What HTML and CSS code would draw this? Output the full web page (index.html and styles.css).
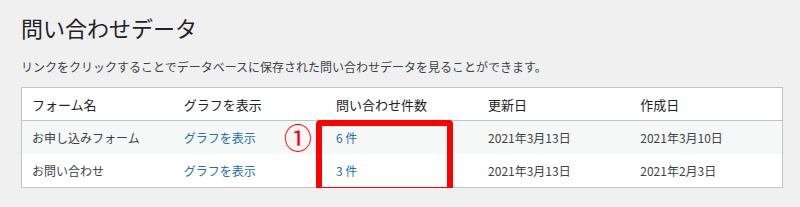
FILE: index.html
```html
<!DOCTYPE html>
<html lang="ja">
<head>
<meta charset="utf-8">
<link rel="stylesheet" href="styles.css">
</head>
<body>
<div class="wrap">
  <h1 class="title">問い合わせデータ</h1>
  <p class="desc">リンクをクリックすることでデータベースに保存された問い合わせデータを見ることができます。</p>
  <div class="table-box">
    <table class="data">
      <thead>
        <tr><th>フォーム名</th><th>グラフを表示</th><th>問い合わせ件数</th><th>更新日</th><th>作成日</th></tr>
      </thead>
      <tbody>
        <tr class="alt"><td>お申し込みフォーム</td><td><a href="#">グラフを表示</a></td><td><a href="#">6 件</a></td><td>2021年3月13日</td><td>2021年3月10日</td></tr>
        <tr><td>お問い合わせ</td><td><a href="#">グラフを表示</a></td><td><a href="#">3 件</a></td><td>2021年3月13日</td><td>2021年2月3日</td></tr>
      </tbody>
    </table>
    <span class="mark">①</span>
    <div class="highlight"></div>
  </div>
</div>
</body>
</html>
```
FILE: styles.css
```css
html, body {
  margin: 0;
  padding: 0;
  background: #f0f0f1;
}
body {
  font-family: "Noto Sans CJK JP", "Noto Sans", sans-serif;
  color: #3c434a;
}
.wrap {
  padding: 10px 17px 0 21px;
}
.title {
  margin: 0;
  font-size: 22px;
  font-weight: 400;
  line-height: 34px;
  color: #1d2327;
}
.desc {
  margin: 15px 0 0;
  font-size: 12px;
  line-height: 16px;
  color: #3c434a;
}
.table-box {
  position: relative;
  margin-top: 12px;
  width: 762px;
}
.data {
  width: 100%;
  border-collapse: collapse;
  table-layout: fixed;
  background: #fff;
  border: 1px solid #c3c4c7;
  box-shadow: 0 1px 1px rgba(0,0,0,.04);
}
.data th {
  text-align: left;
  font-weight: 400;
  font-size: 13px;
  color: #1d2327;
  height: 32px;
  padding: 0 10px;
  border-bottom: 1px solid #c3c4c7;
}
.data td {
  font-size: 12px;
  height: 33px;
  padding: 0 10px;
  color: #3c434a;
}
.data tr.alt td {
  background: #f6f7f7;
}
.data a {
  color: #2271b1;
  text-decoration: none;
}
.mark {
  position: absolute;
  left: 263px;
  top: 34px;
  font-size: 28px;
  line-height: 32px;
  color: #ff0000;
}
.highlight {
  position: absolute;
  left: 295px;
  top: 33px;
  width: 125px;
  height: 61px;
  border: 6px solid #ff0000;
  border-radius: 4px;
}
```
